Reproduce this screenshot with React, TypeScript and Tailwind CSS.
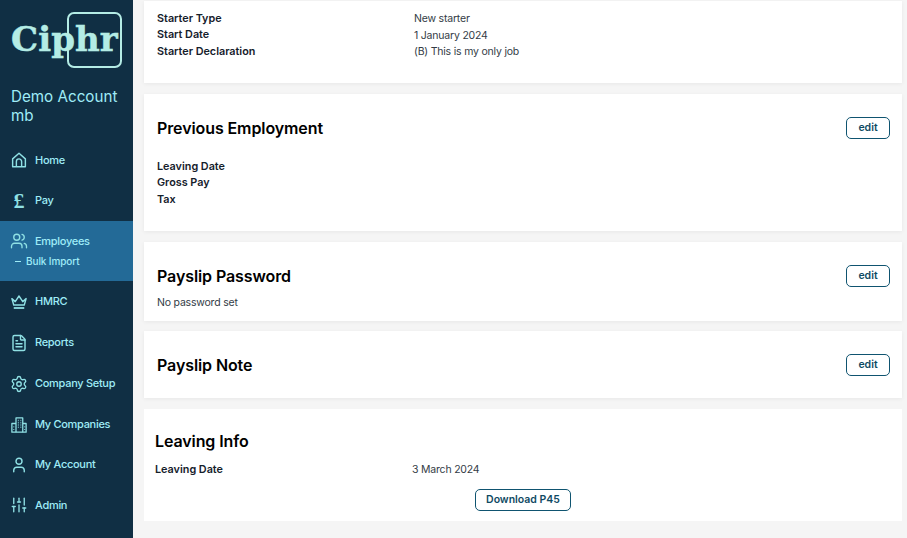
import { Users, FileText, Settings, User, SlidersVertical } from 'lucide-react';

const font = { fontFamily: 'Inter, "Noto Sans", sans-serif' };

function HomeIcon() {
  return (
    <svg width="18" height="18" viewBox="0 0 24 24" fill="none" stroke="currentColor" strokeWidth="1.9" strokeLinejoin="round">
      <path d="M3.500 10.500 12 3l8.500 7.500V21h-17z" />
      <path d="M8.500 21v-7a3.500 3.500 0 0 1 7 0v7" />
    </svg>
  );
}

function CrownIcon() {
  return (
    <svg width="18" height="18" viewBox="0 0 24 24" fill="none" stroke="currentColor" strokeWidth="1.9" strokeLinejoin="round">
      <path d="M2.500 7.500 7 11.500 12 4l5 7.500 4.500-4L19 16H5z" />
      <path d="M5 20h14" strokeWidth="2.400" />
    </svg>
  );
}

function BuildingIcon() {
  return (
    <svg width="18" height="18" viewBox="0 0 24 24" fill="none" stroke="currentColor" strokeWidth="1.7" strokeLinejoin="round">
      <path d="M8 21.500V2.500h9v19" />
      <path d="M8 10H2.500v11.500h19V10H17" />
      <path d="M10.500 6h1M14 6h1M10.500 9h1M14 9h1M10.500 12h1M14 12h1M10.500 15h1M14 15h1M5 14v1M19.500 14v1M5 17.500v1M19.500 17.500v1" />
    </svg>
  );
}

function NavItem({ icon, label, className }: { icon: React.ReactNode; label: string; className?: string }) {
  return (
    <div className={`flex items-center ${className ?? ''}`}>
      <span className="flex w-[35px] shrink-0 justify-center pl-[3px] text-[#8fe0e4]">{icon}</span>
      <span className="text-[11px] font-medium tracking-[-0.3px] text-[#9fecf7]">{label}</span>
    </div>
  );
}

function Row({ label, value }: { label: string; value?: string }) {
  return (
    <div className="flex h-[16.5px] items-center text-[10.5px] leading-none">
      <span className="w-[257px] shrink-0 text-[10.8px] font-semibold text-[#15202b]">{label}</span>
      <span className="tracking-[-0.2px] text-[#333c46]">{value}</span>
    </div>
  );
}

function EditButton() {
  return (
    <button className="flex h-[22px] w-[44px] items-center justify-center rounded-[5px] border border-[#0f5470] bg-white text-[10.5px] font-semibold text-[#0f4a63]">
      edit
    </button>
  );
}

function Heading({ children }: { children: string }) {
  return <h2 className="text-[16px] font-semibold leading-none tracking-[-0.1px] text-black">{children}</h2>;
}

export default function App() {
  return (
    <div className="flex h-[538px] w-[907px] overflow-hidden bg-[#f5f5f5]" style={font}>
      <aside className="flex w-[133px] shrink-0 flex-col bg-[#102f44]">
        <div className="h-[70px] pl-[10px] pt-[12px]">
          <div className="relative h-[57px] w-[114px]">
            <span className="absolute left-[57px] top-0 h-[56px] w-[55px] rounded-[7px] border-[2px] border-[#b4ece5]" />
            <span className="absolute left-[1px] top-[5px] text-[34px] font-bold leading-[44px] tracking-[0.1px] text-[#b4ece5] [-webkit-text-stroke:0.5px_#b4ece5]" style={{ fontFamily: '"DejaVu Serif", serif' }}>
              Ciphr
            </span>
          </div>
        </div>
        <div className="mt-[17px] pl-[11px] text-[15.2px] leading-[19px] text-[#9fecf7]">
          Demo Account
          <br />
          mb
        </div>
        <nav className="mt-[15px] flex flex-col">
          <NavItem className="h-[40px]" icon={<HomeIcon />} label="Home" />
          <NavItem className="h-[41px]" icon={<span className="text-[22px] font-bold leading-none" style={{ fontFamily: '"Liberation Serif", serif' }}>£</span>} label="Pay" />
          <div className="h-[60px] bg-[#236a97] pt-[10px]">
            <NavItem className="h-[20px]" icon={<Users size={18} strokeWidth={1.8} />} label="Employees" />
            <div className="mt-[3px] flex items-center pl-[15px] text-[10px] font-medium tracking-[-0.1px] text-[#9fecf7]">
              <span className="mr-[5px] h-px w-[6px] bg-[#9fecf7]" />
              Bulk Import
            </div>
          </div>
          <NavItem className="h-[41px]" icon={<CrownIcon />} label="HMRC" />
          <NavItem className="h-[41px]" icon={<FileText size={18} strokeWidth={1.9} />} label="Reports" />
          <NavItem className="h-[41px]" icon={<Settings size={18} strokeWidth={1.8} />} label="Company Setup" />
          <NavItem className="h-[41px]" icon={<BuildingIcon />} label="My Companies" />
          <NavItem className="h-[39px]" icon={<User size={18} strokeWidth={1.9} />} label="My Account" />
          <NavItem className="h-[42px]" icon={<SlidersVertical size={18} strokeWidth={1.8} />} label="Admin" />
        </nav>
      </aside>

      <main className="flex flex-1 flex-col gap-[11px] pl-[11px] pr-[5px] pt-px">
        <section className="h-[82px] bg-white pl-[13px] pt-[10px] shadow-[0_1px_4px_rgba(0,0,0,0.06)]">
          <Row label="Starter Type" value="New starter" />
          <Row label="Start Date" value="1 January 2024" />
          <Row label="Starter Declaration" value="(B) This is my only job" />
        </section>

        <section className="h-[137px] bg-white pl-[13px] pr-[12px] pt-[23px] shadow-[0_1px_4px_rgba(0,0,0,0.06)]">
          <div className="flex items-center justify-between">
            <Heading>Previous Employment</Heading>
            <EditButton />
          </div>
          <div className="mt-[20px]">
            <Row label="Leaving Date" />
            <Row label="Gross Pay" />
            <Row label="Tax" />
          </div>
        </section>

        <section className="h-[79px] bg-white pl-[13px] pr-[12px] pt-[23px] shadow-[0_1px_4px_rgba(0,0,0,0.06)]">
          <div className="flex items-center justify-between">
            <Heading>Payslip Password</Heading>
            <EditButton />
          </div>
          <p className="mt-[8px] text-[10.5px] tracking-[-0.2px] text-[#333c46]">No password set</p>
        </section>

        <section className="-mt-px flex h-[67px] items-center justify-between bg-white pl-[13px] pr-[12px] shadow-[0_1px_4px_rgba(0,0,0,0.06)]">
          <Heading>Payslip Note</Heading>
          <EditButton />
        </section>

        <section className="h-[112px] bg-white pl-[11px] pt-[24px]">
          <Heading>Leaving Info</Heading>
          <div className="mt-[13px]">
            <Row label="Leaving Date" value="3 March 2024" />
          </div>
          <div className="mt-[10px] flex justify-center pr-[11px]">
            <button className="flex h-[22px] w-[96px] items-center justify-center rounded-[5px] border border-[#0f5470] bg-white text-[10.5px] font-semibold text-[#0f4a63]">
              Download P45
            </button>
          </div>
        </section>
      </main>
    </div>
  );
}
